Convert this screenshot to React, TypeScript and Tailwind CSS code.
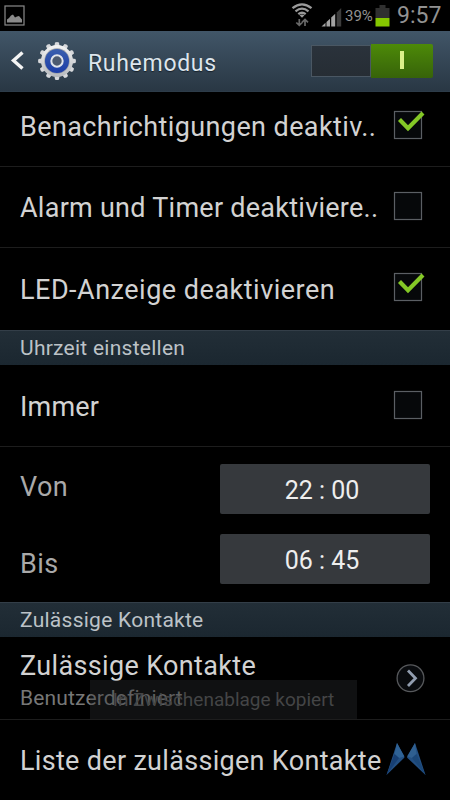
import type { ReactNode } from "react";

function PictureIcon() {
  return (
    <svg className="h-[22px] w-[22px] shrink-0" viewBox="0 0 22 22" fill="none">
      <rect x="1" y="1" width="19" height="19" stroke="#8a8a8a" strokeWidth="1.2" />
      <path d="M3 17.500V14.500L5 13L7 10.500L9 9.500L11 12.500L13 11.500L15 11L18 14.500V17.500Z" fill="#8a8a8a" />
    </svg>
  );
}

function WifiIcon() {
  return (
    <svg className="h-[24px] w-[22px] shrink-0" viewBox="0 0 22 24" fill="none">
      <path d="M1.500 5.200Q11 -2.500 20.500 5.200M4.500 8.300Q11 3 17.500 8.300M7.300 11.200Q11 8.200 14.700 11.200" stroke="#9a9a9a" strokeWidth="2.300" />
      <path d="M8.500 12.200Q11 10.600 13.500 12.200L11 14.800Z" fill="#9a9a9a" />
      <path d="M8.300 16V22M5.300 19.500L8.300 22.300L11.300 19.500M14 23V17M11 19.300L14 16.500L17 19.300" stroke="#686868" strokeWidth="1.700" />
    </svg>
  );
}

function SignalIcon() {
  return (
    <svg className="h-[20px] w-[21px] shrink-0" viewBox="0 0 21 20">
      <path d="M0.500 19.500L4.500 15.800V19.500Z" fill="#a2a2a2" />
      <path d="M5.500 15L9 11.700V19.500H5.500Z" fill="#a2a2a2" />
      <path d="M10.200 10.600L14.200 6.800V19.500H10.200Z" fill="#a2a2a2" />
      <path d="M15.700 5.500L20.200 1V19.500H15.700Z" fill="#3c3c3c" />
    </svg>
  );
}

function BatteryIcon() {
  return (
    <svg className="h-[22px] w-[15px] shrink-0" viewBox="0 0 15 22">
      <path d="M4.500 0H10.500V3H14.500V13H0.500V3H4.500Z" fill="#303030" />
      <rect x="0.500" y="13" width="14" height="8.500" fill="#86c800" />
    </svg>
  );
}

function StatusBar() {
  return (
    <div className="flex h-[31px] shrink-0 items-start bg-black pl-1">
      <div className="flex h-full w-[287px] items-center pt-[1px]">
        <PictureIcon />
      </div>
      <div className="mt-[3px]">
        <WifiIcon />
      </div>
      <div className="mt-[7px] ml-[8px]">
        <SignalIcon />
      </div>
      <span className="mt-[8px] ml-[3px] w-[30px] text-[15px] leading-[17px] text-[#929292]">39%</span>
      <div className="mt-[5px]">
        <BatteryIcon />
      </div>
      <span className="mt-[3px] ml-[7px] text-[23px] leading-[25px] text-[#929292]">9:57</span>
    </div>
  );
}

const teeth = [0, 30, 60, 90, 120, 150, 180, 210, 240, 270, 300, 330];

function GearIcon() {
  return (
    <svg className="h-[40px] w-[40px] shrink-0" viewBox="0 0 40 40">
      <defs>
        <linearGradient id="gearMetal" x1="0" y1="0" x2="0" y2="1">
          <stop offset="0" stopColor="#f4f4f4" />
          <stop offset="1" stopColor="#b5b8bc" />
        </linearGradient>
        <linearGradient id="gearBlue" x1="0" y1="0" x2="0" y2="1">
          <stop offset="0" stopColor="#3a5fae" />
          <stop offset="1" stopColor="#1c3da8" />
        </linearGradient>
      </defs>
      {teeth.map((angle) => (
        <path key={angle} d="M17.300 6L18 1.500Q20 0.500 22 1.500L22.700 6Z" fill="#d6d8db" transform={`rotate(${angle} 20 20)`} />
      ))}
      <circle cx="20" cy="20" r="16" fill="url(#gearMetal)" />
      <circle cx="20" cy="20" r="12.700" fill="#9ba0a8" />
      <circle cx="20" cy="20" r="12" fill="url(#gearBlue)" />
      <circle cx="20" cy="20" r="5.700" fill="#4c5a70" stroke="#dfe3ea" strokeWidth="2" />
    </svg>
  );
}

function TitleBar() {
  return (
    <div className="flex h-[61px] shrink-0 items-center border-b border-[#2d3c49] bg-linear-to-b from-[#415668] to-[#293744] pl-[10px]">
      <svg className="h-[20px] w-[14px] shrink-0" viewBox="0 0 14 20" fill="none">
        <path d="M12.500 1.500L3.500 9.500L12.500 17.500" stroke="#f4f4f4" strokeWidth="3.400" />
      </svg>
      <div className="ml-[13px]">
        <GearIcon />
      </div>
      <span className="ml-[11px] w-[223px] pt-[4px] text-[23px] leading-none tracking-[0.700px] text-[#dde5ec] [text-shadow:0_1px_1px_#17212b]">Ruhemodus</span>
      <div className="flex h-[34px] w-[122px] items-center">
        <div className="h-[32px] w-[60px] border border-[#4a5763] bg-linear-to-b from-[#2a323b] to-[#262d34]" />
        <div className="flex h-[34px] w-[62px] items-center justify-center rounded-r-[2px] bg-linear-to-b from-[#4d8a08] to-[#376309]">
          <div className="mb-[2px] h-[18px] w-[4px] bg-[#dcf08a]" />
        </div>
      </div>
    </div>
  );
}

function Checkbox({ checked = false }: { checked?: boolean }) {
  return (
    <svg className="-mt-[2px] h-[34px] w-[36px] shrink-0" viewBox="0 0 36 34" fill="none">
      <rect x="2.500" y="3.500" width="27" height="27" fill="#06080a" stroke="#5b5f64" strokeWidth="1.200" />
      {checked && <path d="M7.500 11.500L16 20.200L31 5" stroke="#84c826" strokeWidth="4.200" />}
    </svg>
  );
}

function Row({ className, label, children }: { className: string; label: string; children?: ReactNode }) {
  return (
    <div className={`flex shrink-0 items-center pl-5 ${className}`}>
      <div className="w-[372px] pt-[4px] text-[27px] leading-none whitespace-nowrap">{label}</div>
      {children}
    </div>
  );
}

function SectionHeader({ children }: { children: ReactNode }) {
  return (
    <div className="h-[35px] shrink-0 border-t border-[#333e48] bg-linear-to-b from-[#222e37] to-[#1b2730] pt-[5px] pl-5 text-[21px] leading-[25px] tracking-[0.260px] text-[#bcc2c7]">
      {children}
    </div>
  );
}

function TimeRow({ className, label, value }: { className: string; label: string; value: string }) {
  return (
    <div className="flex h-[50px] items-center justify-between">
      <span className={`text-[27px] leading-none tracking-[0.400px] text-[#a9a9a9] ${className}`}>{label}</span>
      <div className="flex h-full w-[210px] items-center justify-center rounded-[2px] bg-[#36393d] pt-[2px] pr-[6px] text-[25px] leading-none text-[#eeeeee]">
        {value}
      </div>
    </div>
  );
}

function WingsIcon() {
  return (
    <svg className="-ml-[6px] h-[34px] w-[40px] shrink-0" viewBox="0 0 40 34">
      <path d="M11 1L0.500 33L18.500 15.500Z" fill="#234f82" />
      <path d="M11 1L8.500 12L13 16L18.500 14.500Z" fill="#2f6295" />
      <path d="M8.500 12L0.500 33L13 16Z" fill="#173f73" />
      <path d="M29 1L39.500 33L21 15.500Z" fill="#234f82" />
      <path d="M29 1L30.500 12L26 16L21 14.500Z" fill="#2f5f90" />
      <path d="M30.500 12L39.500 33L26 16Z" fill="#1b4778" />
    </svg>
  );
}

// half faded out over the list
function Toast() {
  return (
    <div className="absolute top-[680px] left-[90px] flex h-[39px] w-[267px] items-center justify-center bg-[#303234]/34 text-[19px] leading-none whitespace-nowrap text-[#444546]">
      In Zwischenablage kopiert
    </div>
  );
}

export default function App() {
  return (
    <div className="relative flex h-[800px] w-[450px] flex-col overflow-hidden bg-black font-[Roboto,sans-serif] text-[#d2d2d2]">
      <StatusBar />
      <TitleBar />
      <Row className="h-[75px] border-b border-[#1d1d1d] pb-[7px] tracking-[0.400px]" label="Benachrichtigungen deaktiv..">
        <Checkbox checked />
      </Row>
      <Row className="h-[81px] border-b border-[#1d1d1d] pb-[1px] tracking-[0.260px]" label="Alarm und Timer deaktiviere..">
        <Checkbox />
      </Row>
      <Row className="h-[82px] pb-[2px] tracking-[0.500px]" label="LED-Anzeige deaktivieren">
        <Checkbox checked />
      </Row>
      <SectionHeader>Uhrzeit einstellen</SectionHeader>
      <Row className="h-[82px] border-b border-[#1d1d1d] tracking-[0.200px]" label="Immer">
        <Checkbox />
      </Row>
      <div className="flex h-[155px] shrink-0 flex-col gap-[20px] pt-[17px] pr-5 pl-5">
        <TimeRow className="pb-[4px]" label="Von" value="22 : 00" />
        <TimeRow className="pt-[11px]" label="Bis" value="06 : 45" />
      </div>
      <SectionHeader>Zulässige Kontakte</SectionHeader>
      <div className="flex h-[83px] shrink-0 items-start border-b border-[#1d1d1d] pl-5">
        <div className="w-[375px] pt-[13px]">
          <div className="text-[27px] leading-[32px] tracking-[0.350px]">Zulässige Kontakte</div>
          <div className="text-[21px] leading-[32px] tracking-[0.150px] text-[#777777]">Benutzerdefiniert</div>
        </div>
        <svg className="mt-[26px] h-[30px] w-[30px] shrink-0" viewBox="0 0 30 30" fill="none">
          <circle cx="15.500" cy="15.300" r="13.400" fill="#090b0e" stroke="#57595c" strokeWidth="1.300" />
          <path d="M13 7.500L20.500 15.300L13 23" stroke="#929eb0" strokeWidth="2.800" />
        </svg>
      </div>
      <Row className="h-[80px] pb-[2px] tracking-[0.310px]" label="Liste der zulässigen Kontakte">
        <WingsIcon />
      </Row>
      <Toast />
    </div>
  );
}
